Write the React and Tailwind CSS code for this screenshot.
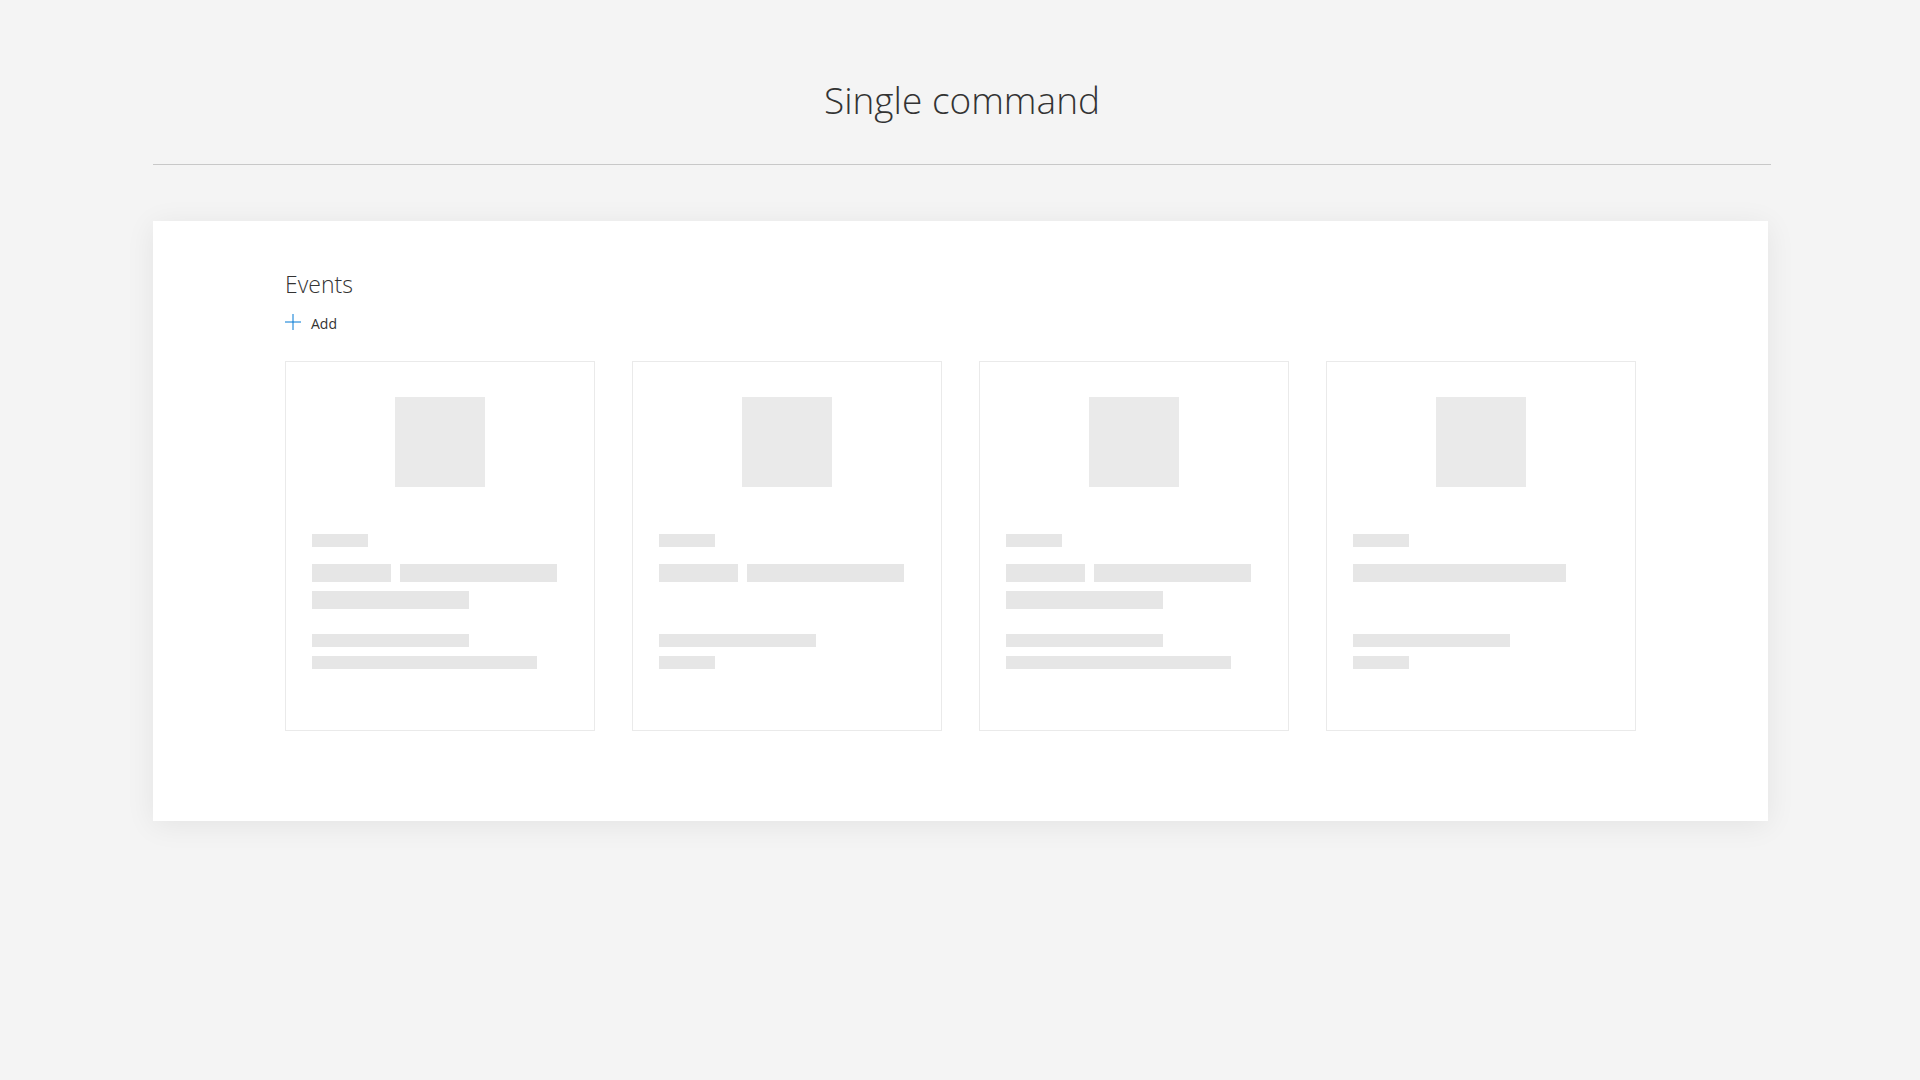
// Single command – events placeholder board
const FONT = { fontFamily: '"Open Sans", "Noto Sans", Arial, sans-serif' };

const tiles = [
  { second: "split", third: true, last: "long" },
  { second: "split", third: false, last: "short" },
  { second: "split", third: true, last: "long" },
  { second: "full", third: false, last: "short" },
];

function Bar({ className }) {
  return <div className={`bg-[#e6e6e6] ${className}`} />;
}

function Tile({ tile }) {
  return (
    <div className="w-[310px] h-[370px] border border-[#eaeaea] bg-white pt-[35px] px-[26px]">
      {/* picture placeholder */}
      <div className="w-[90px] h-[90px] mx-auto bg-[#eaeaea]" />

      <Bar className="mt-[47px] w-[56px] h-[13px]" />

      {tile.second === "split" ? (
        <div className="mt-[17px] flex gap-[9px]">
          <Bar className="w-[79px] h-[18px]" />
          <Bar className="w-[157px] h-[18px]" />
        </div>
      ) : (
        <Bar className="mt-[17px] w-[213px] h-[18px]" />
      )}

      <Bar className={`mt-[9px] w-[157px] h-[18px] ${tile.third ? "" : "invisible"}`} />

      <Bar className="mt-[25px] w-[157px] h-[13px]" />
      <Bar className={`mt-[9px] h-[13px] ${tile.last === "long" ? "w-[225px]" : "w-[56px]"}`} />
    </div>
  );
}

export default function App() {
  return (
    <div className="min-h-screen bg-[#f4f4f4] text-[#333333]" style={FONT}>
      <div className="pl-[153px] pb-[200px]">
        {/* Header */}
        <h1 className="pt-[74px] text-[37px] leading-[51px] font-light text-center w-[1618px]">
          Single command
        </h1>
        <div className="mt-[39px] w-[1618px] h-px bg-[#c8c8c8]" />

        {/* Board */}
        <section className="mt-[56px] w-[1615px] h-[600px] bg-white shadow-[0_4px_28px_rgba(0,0,0,0.07)] pl-[132px] pt-[48px]">
          <h2 className="text-[23px] leading-[31px] font-light">Events</h2>

          <button className="mt-[12px] flex items-start gap-[10px] text-[14px] leading-[20px] text-[#333333]">
            <svg width="16" height="16" viewBox="0 0 16 16" className="mt-[2px]">
              <path d="M8 0v16M0 8h16" stroke="#0078d4" strokeWidth="1" fill="none" />
            </svg>
            <span className="mt-[2px]">Add</span>
          </button>

          <div className="mt-[27px] flex gap-[37px]">
            {tiles.map((t, i) => (
              <Tile key={i} tile={t} />
            ))}
          </div>
        </section>
      </div>
    </div>
  );
}
